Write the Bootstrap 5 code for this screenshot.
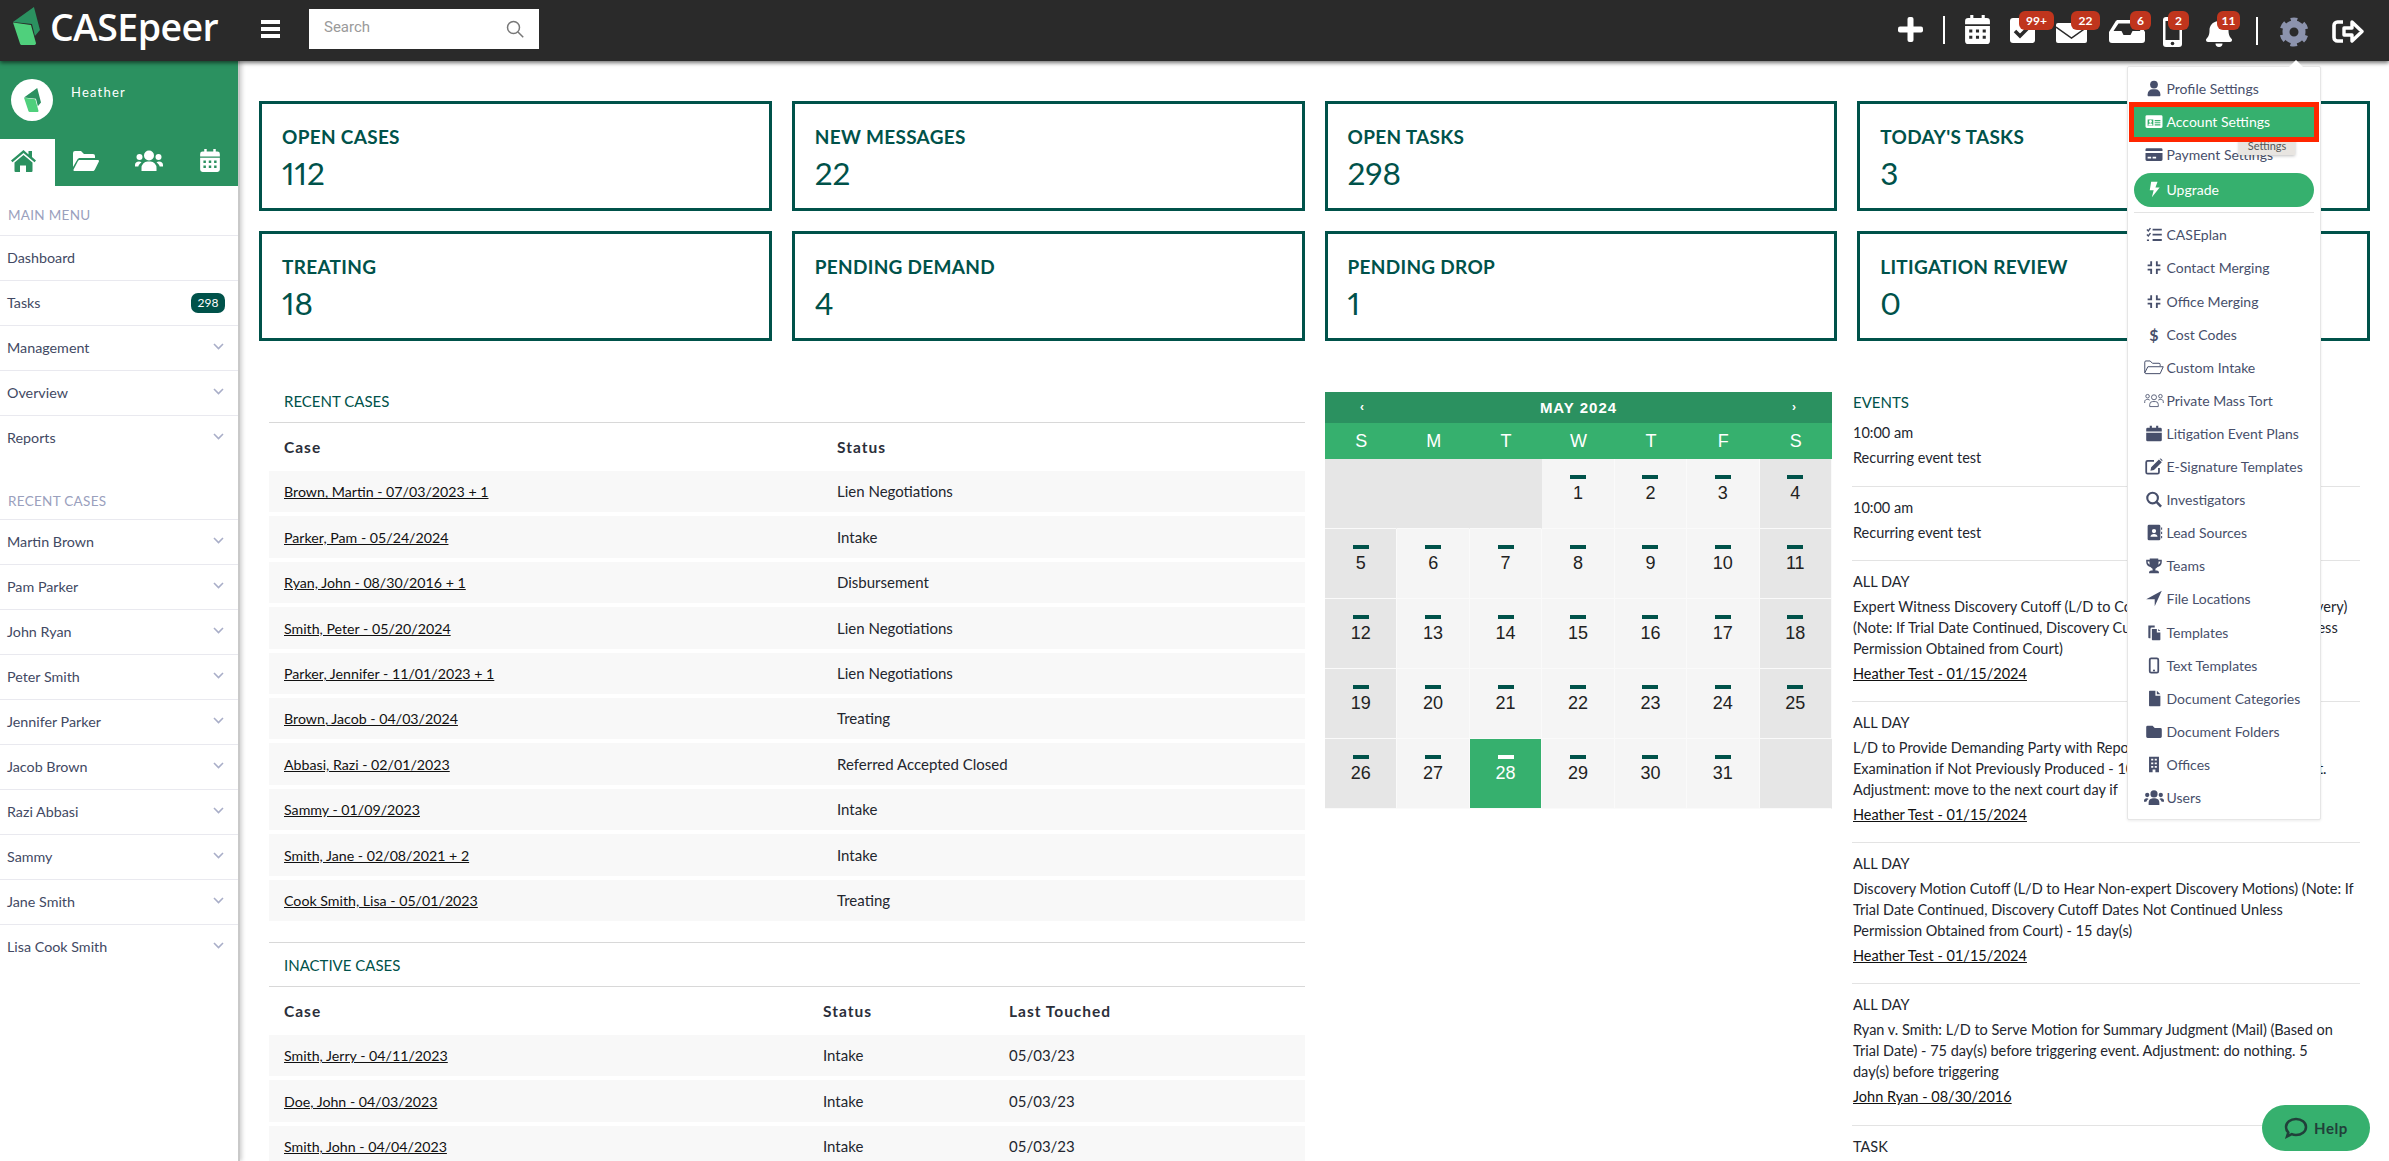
<!DOCTYPE html>
<html lang="en"><head><meta charset="utf-8"><title>CASEpeer</title>
<link rel="stylesheet" href="https://cdn.jsdelivr.net/npm/bootstrap@5.3.0/dist/css/bootstrap.min.css">
<script src="https://cdn.jsdelivr.net/npm/bootstrap@5.3.0/dist/js/bootstrap.bundle.min.js"></script>
<style>
:root{--teal:#00524a;--g1:#2b9160;--g2:#36b06e;--ink:#2b2f3a;--slate:#474f6b}
html,body{height:1161px;overflow:hidden}
body{font-family:Lato,"Liberation Sans",sans-serif;font-size:14px;color:#23262e;background:#fff}
.topbar{height:61px;background:#2a2a2a;padding:0;box-shadow:0 2px 4px rgba(0,0,0,.55);position:relative;z-index:5;justify-content:flex-start;align-items:flex-start;flex-wrap:nowrap}
.logo-wrap{margin:7px 0 0 13px;width:205px;display:flex;gap:10px;align-items:flex-start}
.logo-text{font-family:"Open Sans",sans-serif;font-size:37.5px;line-height:42px;color:#fff;font-weight:600;letter-spacing:-.6px;margin-top:-1px}
.burger{margin:20px 0 0 43px;width:19px}
.burger i{display:block;height:3.5px;background:#fff;margin-bottom:3.5px}
.search-box{margin:9px 0 0 29px;width:230px;height:40px;background:#fff;display:flex;align-items:center;justify-content:space-between;padding:0 15px;border:0}
.search-box input{border:0;outline:0;font-family:Roboto,sans-serif;font-size:15px;width:170px;padding:0;margin-top:-3px}
.search-box input::placeholder{color:#9a9a9a}
.tools{margin-left:auto;display:flex;align-items:flex-start;padding-right:25px;height:61px}
.tool{position:relative;height:61px;color:#fff}
.tool svg{display:block}
.t1{padding-top:17px}.t2{margin-left:20px;padding-top:16px}.t3{margin-left:20px;padding-top:15px}.t4{margin-left:20px;padding-top:18px}
.t5{margin-left:21px;padding-top:23px}.t6{margin-left:22px;padding-top:20px}.t7{margin-left:18px;padding-top:17px}.t8{margin-left:24px;padding-top:18px}
.t9{margin-left:24px;padding-top:17px}.t10{margin-left:22px;padding-top:17px}.t11{margin-left:24px;padding-top:20px}
.vsep{width:2px;height:28px;background:#fff}
.nbadge{position:absolute;top:11px;height:19px;background:#c0351d;color:#fff;border-radius:6px;font-family:Lato,sans-serif;font-size:12px;font-weight:700;line-height:19px;padding:0;text-align:center}
.b4{left:9px;width:35px}.b5{left:15px;width:29px}.b6{left:21px;width:21px}.b7{left:5px;width:21px}.b8{left:11px;width:23px}
.shell{display:flex;height:1100px}
.side{width:240px;flex:none;border-right:2px solid #c9c9c9;box-shadow:2px 0 4px rgba(0,0,0,.18);background:#fff;position:relative;z-index:2}
.side-top{background:var(--g1);height:125px;position:relative}
.who{display:flex;padding:18px 0 0 11px;height:78px}
.ava{width:42px;height:42px;border-radius:50%;background:#fff;display:flex;align-items:center;justify-content:center}
.who-name{color:#fff;font-size:13px;letter-spacing:1.2px;margin:3px 0 0 18px;line-height:20px}
.tabs{display:flex;height:47px}
.tabs a{display:flex;align-items:center;justify-content:center;color:#fff;height:47px;width:62px;padding-bottom:4px}
.tabs a.on{background:#fff;color:var(--g1);width:55px;padding-right:7px}
.tabs a:nth-child(3){width:66px}
.tabs a:nth-child(4){width:56px}
.side-h{font-size:13.5px;color:#9aa0bd;line-height:20px;padding:19px 0 10px 8px;letter-spacing:.3px}
.side-h.second{padding:30px 0 8px 8px}
.side-list{border-top:1.5px solid #e9e9ef;border-radius:0}
.side-list .list-group-item{height:45px;padding:0 14px 1px 7px;display:flex;align-items:center;justify-content:space-between;color:#424963;font-size:14.3px;border-color:#e9e9ef;border-width:0 0 1.5px;background:transparent}
.cnt{background:var(--teal);font-size:12px;font-weight:400;border-radius:7px;padding:0;width:34px;height:20px;line-height:20px;margin-right:-1px}
.chev{color:#a9aec8;margin-top:-3px}
.main{flex:1;padding:40px 19px 0 19px;min-width:0}
.stat-grid{display:grid;grid-template-columns:repeat(4,1fr);gap:20px}
.stat-tile{height:110px;border:3px solid var(--teal);border-radius:0;color:var(--teal)}
.stat-tile .card-body{padding:22px 20px 0}
.st-name{font-size:19px;line-height:22px;font-weight:700;margin-bottom:7px;letter-spacing:.3px}
.st-num{font-size:31.5px;line-height:36px;font-weight:400;font-variant-numeric:proportional-nums;font-feature-settings:"pnum" 1}
.lower{display:grid;grid-template-columns:1036px 507px 508px;gap:0 20px;margin:43px 0 0 10px}
.sec-h{color:var(--teal);font-size:15px;line-height:20px;padding:7px 15px 11px;border-bottom:1.5px solid #d8d8d8}
.sec-h.alt{padding:12px 15px 11px;border-top:1.5px solid #d8d8d8;margin-top:17px}
.case-table{table-layout:fixed;width:100%;border-collapse:separate;border-spacing:0 4px;margin:0}
.case-table th,.case-table td{border:0;padding:0 15px;vertical-align:middle;background:transparent;color:#23262e;box-shadow:none;font-size:15px}
.case-table th{height:40px;padding-top:2px;color:var(--ink);font-weight:700;letter-spacing:1px;font-size:15.5px}
.case-table td{height:41.4px;--bs-table-bg:#f8f8f8;background:#f8f8f8}
.case-table td a{font-size:14.2px}
.case-table a,.ev-item a{color:#111;text-decoration:underline}
.c1{width:553px}.c2{width:539px}.c3{width:186px}
.cal-wrap{align-self:start;margin-top:8px}
.cal-title{height:31px;background:var(--g1);color:#fff;display:flex;align-items:center;justify-content:space-between;padding:0 35px;font:700 15px/31px "Liberation Sans",sans-serif;letter-spacing:1px}
.cal-title span{font-size:12px}
.cal-grid{display:grid;grid-template-columns:repeat(7,1fr);font-family:"Liberation Sans",sans-serif}
.dow{height:36px;background:var(--g2);color:#fff;font-size:18px;line-height:36px;text-align:center}
.day{height:70px;background:#f5f5f5;border-right:1px solid #fafafa;border-bottom:1px solid #fafafa;text-align:center;padding-top:16px;font-size:18px;line-height:24px;color:#222}
.day i{display:block;width:16px;height:4px;background:var(--teal);margin:0 auto 2px}
.day.we{background:#e6e6e6}
.day.blank{border-right-color:#e6e6e6}
.day.now{background:var(--g2);color:#fff}
.day.now i{background:#fff}
.events{margin-top:1px}
.events .sec-h{border:0;padding:7px 1px 0;height:27px}
.ev-item{padding:10px 1px 17.6px;border-bottom:1.5px solid #e3e3e3;line-height:21px;font-size:14.5px}
.ev-item p{margin:0}
.ev-item .ev-t{margin-bottom:4px}
.ev-item a{display:block;margin-top:3.5px}
.set-menu{position:absolute;display:block;top:66px;right:68px;width:194px;margin:0;padding:7px 6px 6px;border:1px solid #e6e6e6;border-radius:2px;z-index:6;background:#fff;min-width:0;box-shadow:0 1px 3px rgba(0,0,0,.08)}
.set-menu::before{content:"";position:absolute;top:-7px;left:161px;border:7px solid transparent;border-top:0;border-bottom-color:#fff}
.set-list{display:flex;flex-direction:column;gap:3.1px;list-style:none;margin:0;padding:0}
.set-menu .dropdown-item{height:30px;padding:0 0 2px 10px;display:flex;align-items:center;gap:2.5px;color:var(--slate);font-size:14px;white-space:nowrap}
.set-menu .dropdown-item svg{flex:none;width:20px;height:17px}
.set-menu .dropdown-item.act{background:var(--g2);color:#fff;outline:5px solid #ff2600;position:relative;z-index:3}
.set-menu .dropdown-item.upg{background:var(--g2);color:#fff;height:34px;border-radius:17px;margin-top:-.1px}
.set-menu .dropdown-divider{margin:2px 0 4.5px;border-color:#e3e3e3;opacity:1}
.dollar{width:20px;text-align:center;font-weight:700;font-size:16px;line-height:17px}
.tip{position:absolute;left:111px;top:69px;width:56px;height:19px;background:#e8e5e1;color:#555;font-size:11px;line-height:20px;text-align:center;z-index:2;box-shadow:0 1px 3px rgba(0,0,0,.25)}
.help-btn{position:fixed;left:2262px;top:1105px;width:108px;height:46px;border-radius:23px;background:var(--g2);border:0;color:#21403a;font-weight:700;font-size:15px;letter-spacing:.6px;display:flex;align-items:center;justify-content:center;gap:6px;z-index:7;padding:0}
</style></head><body>
<svg width="0" height="0" class="position-absolute" aria-hidden="true"><defs>
<symbol id="i-logo" viewBox="0 0 27 38"><path fill="#2b9160" d="M0 15 21 0l6 23-5 6-3-12z"/><path fill="#4fd07c" d="M0 15.5 18 18l5 18c.2 1-.5 2-1.5 2H9c-1 0-1.6-.4-2-1.5z"/></symbol>
<symbol id="i-home" viewBox="0 0 25 22"><path d="M12.500 0 0 10.500l1.500 1.800L12.500 3l11 9.300 1.500-1.800-4-3.400V1h-3.500v3.400z"/><path d="M3.500 12.500 12.500 5l9 7.500V21a1 1 0 0 1-1 1h-5.500v-6.500h-6V22H4.500a1 1 0 0 1-1-1z"/></symbol>
<symbol id="i-fopen" viewBox="0 0 26 20"><path d="M0 2a2 2 0 0 1 2-2h6l3 3h9a2 2 0 0 1 2 2v2H7c-1.200 0-2 .5-2.600 1.500L0 16z"/><path d="M6.500 9H25c.8 0 1.300.8.900 1.500l-4 8c-.3.9-1 1.500-2 1.500H1.500c-.8 0-1.300-.8-.9-1.500l4.400-8.500c.3-.4.900-1 1.500-1z"/></symbol>
<symbol id="i-users" viewBox="0 0 28 21"><circle cx="14" cy="5.500" r="5"/><circle cx="4.500" cy="7" r="3"/><circle cx="23.500" cy="7" r="3"/><path d="M6.500 21v-3a6.500 6.500 0 0 1 6-6.500h3a6.500 6.500 0 0 1 6 6.500v3z"/><path d="M0 16.500v-1.500c0-2 1.500-3.500 4-3.500 1 0 1.800.3 2.500 1-1.500 1-2.800 2.400-3.200 4zM28 16.500V15c0-2-1.500-3.500-4-3.500-1 0-1.800.3-2.500 1 1.500 1 2.800 2.400 3.200 4z"/></symbol>
<symbol id="i-cal" viewBox="0 0 24 28"><path fill-rule="evenodd" d="M5 0h3v3h8V0h3v3h2a3 3 0 0 1 3 3v3H0V6a3 3 0 0 1 3-3h2zM0 10.500h24V25a3 3 0 0 1-3 3H3a3 3 0 0 1-3-3zM4 14v3h3v-3zM10.500 14v3h3v-3zM17 14v3h3v-3zM4 20v3h3v-3zM10.500 20v3h3v-3zM17 20v3h3v-3z"/></symbol>
<symbol id="i-user" viewBox="0 0 24 24"><circle cx="12" cy="6.500" r="5.500"/><path d="M3 22v-2a7 7 0 0 1 7-7h4a7 7 0 0 1 7 7v2a1 1 0 0 1-1 1H4a1 1 0 0 1-1-1z"/></symbol>
<symbol id="i-id" viewBox="0 0 24 24"><path fill-rule="evenodd" d="M2 3h20a2 2 0 0 1 2 2v14a2 2 0 0 1-2 2H2a2 2 0 0 1-2-2V5a2 2 0 0 1 2-2zM3 9v9h8V9zM13 10v1.500h8V10zM13 13v1.500h8V13zM13 16v1.500h8V16z"/><circle cx="7" cy="12" r="2"/><path d="M4 17.500c0-2 1.500-3 3-3s3 1 3 3z"/></symbol>
<symbol id="i-card" viewBox="0 0 24 24"><path fill-rule="evenodd" d="M2 3h20a2 2 0 0 1 2 2v2H0V5a2 2 0 0 1 2-2zM0 10h24v9a2 2 0 0 1-2 2H2a2 2 0 0 1-2-2zM3 15v2.500h5V15zM10 15v2.500h5V15z"/></symbol>
<symbol id="i-bolt" viewBox="0 0 24 24"><path d="M8 1h9l-3 8h6L9 23l2.500-10H6z"/></symbol>
<symbol id="i-tasks" viewBox="0 0 24 24"><path d="M2 5l2 2 3-4M2 12l2 2 3-4M2 20h3" fill="none" stroke="currentColor" stroke-width="2"/><path d="M10 4h13v2.500H10zM10 11h13v2.500H10zM10 18.500h13V21H10z"/></symbol>
<symbol id="i-comp" viewBox="0 0 24 24"><path d="M8 3v6H3M16 3v6h5M8 21v-6H3M16 21v-6h5" fill="none" stroke="currentColor" stroke-width="2.600"/></symbol>
<symbol id="i-fo" viewBox="0 0 26 20"><path d="M1 17V3a1.500 1.500 0 0 1 1.500-1.500H8l3 3h8.500A1.500 1.500 0 0 1 21 6v2M1 17l4-8h20l-4 9H2z" fill="none" stroke="currentColor" stroke-width="1.300" stroke-linejoin="round"/></symbol>
<symbol id="i-uo" viewBox="0 0 28 21"><g fill="none" stroke="currentColor" stroke-width="1.200"><circle cx="14" cy="6" r="3.500"/><circle cx="5" cy="4.500" r="2.500"/><circle cx="23" cy="4.500" r="2.500"/><path d="M8 19v-3a4 4 0 0 1 4-4h4a4 4 0 0 1 4 4v3zM1 14v-2c0-2 1.500-3 4-3 1.500 0 2.500.5 3 1M27 14v-2c0-2-1.500-3-4-3-1.500 0-2.500.5-3 1"/></g></symbol>
<symbol id="i-c2" viewBox="0 0 24 24"><path d="M6 1h3v3h6V1h3v3h3a2 2 0 0 1 2 2v3H1V6a2 2 0 0 1 2-2h3zM1 11h22v10a2 2 0 0 1-2 2H3a2 2 0 0 1-2-2z"/></symbol>
<symbol id="i-edit" viewBox="0 0 24 24"><path d="M19 14v6a2 2 0 0 1-2 2H3a2 2 0 0 1-2-2V6a2 2 0 0 1 2-2h9" fill="none" stroke="currentColor" stroke-width="2.500"/><path d="M8 13 19 2l4 4-11 11-5 1zM20 1a1.500 1.500 0 0 1 2 0l1.500 1.500a1.500 1.500 0 0 1 0 2z"/></symbol>
<symbol id="i-sr" viewBox="0 0 24 24"><circle cx="10" cy="10" r="7.500" fill="none" stroke="currentColor" stroke-width="3"/><path d="M15.500 15.500 22 22" stroke="currentColor" stroke-width="3.500"/></symbol>
<symbol id="i-addr" viewBox="0 0 24 24"><path fill-rule="evenodd" d="M5 1h14a2 2 0 0 1 2 2v18a2 2 0 0 1-2 2H5a2 2 0 0 1-2-2V3a2 2 0 0 1 2-2zM12 7a3 3 0 1 0 0 6 3 3 0 0 0 0-6zM7 18h10c0-2.500-2-4-5-4s-5 1.500-5 4z"/><path d="M22 5h1.500v3H22zM22 11h1.500v3H22zM22 17h1.500v3H22z"/></symbol>
<symbol id="i-tro" viewBox="0 0 24 24"><path fill-rule="evenodd" d="M6 2h12v2h5v3c0 4-3 6.500-6 7-1 1.200-2 2-3 2.500V19h2c1.500 0 3 1 3 3v1H5v-1c0-2 1.500-3 3-3h2v-2.500c-1-.5-2-1.300-3-2.500-3-.5-6-3-6-7V4h5zM3 6.500c0 2 1 3.500 3 4.500-.4-1.500-.5-3-.5-4.500zM21 6.500h-2.500c0 1.500-.1 3-.5 4.500 2-1 3-2.500 3-4.500z"/></symbol>
<symbol id="i-loc" viewBox="0 0 24 24"><path d="M23 1 13 23v-10H1z"/></symbol>
<symbol id="i-copy" viewBox="0 0 24 24"><path d="M4 2h9v3H9a2 2 0 0 0-2 2v13H5a1 1 0 0 1-1-1z"/><path d="M9 7h7v5h5v10a1 1 0 0 1-1 1H10a1 1 0 0 1-1-1zM18 7l3 3h-3z"/></symbol>
<symbol id="i-mob" viewBox="0 0 24 24"><rect x="6" y="2" width="12" height="20" rx="2" fill="none" stroke="currentColor" stroke-width="2.500"/><circle cx="12" cy="19" r="1.500"/></symbol>
<symbol id="i-file" viewBox="0 0 24 24"><path d="M6 1h8v7h7v14a1 1 0 0 1-1 1H6a1 1 0 0 1-1-1V2a1 1 0 0 1 1-1zM16 1l5 5h-5z"/></symbol>
<symbol id="i-fold" viewBox="0 0 24 24"><path d="M1 6a2 2 0 0 1 2-2h7l3 3h8a2 2 0 0 1 2 2v10a2 2 0 0 1-2 2H3a2 2 0 0 1-2-2z"/></symbol>
<symbol id="i-bld" viewBox="0 0 24 24"><path fill-rule="evenodd" d="M5 1h14v22h-5v-4h-4v4H5zM8 4v2.500h3V4zM13 4v2.500h3V4zM8 9v2.500h3V9zM13 9v2.500h3V9zM8 14v2.500h3V14zM13 14v2.500h3V14z"/></symbol>
</defs></svg>

<nav class="navbar topbar">
  <div class="logo-wrap"><svg width="27" height="38"><use href="#i-logo"/></svg><span class="logo-text">CASEpeer</span></div>
  <div class="burger"><i></i><i></i><i></i></div>
  <form class="search-box"><input type="text" placeholder="Search" aria-label="Search"><svg width="18" height="18" viewBox="0 0 24 24" fill="none" stroke="#777" stroke-width="2"><circle cx="10" cy="10" r="8"/><path d="M16 16l7 7"/></svg></form>
  <div class="tools">
    <div class="tool t1"><svg width="25" height="25" viewBox="0 0 25 25" fill="#fff"><rect x="9.500" width="6" height="25" rx="2"/><rect y="9.500" width="25" height="6" rx="2"/></svg></div>
    <div class="tool t2"><div class="vsep"></div></div>
    <div class="tool t3"><svg width="25" height="29" fill="#fff"><use href="#i-cal"/></svg></div>
    <div class="tool t4"><svg width="25" height="25" viewBox="0 0 25 25"><rect width="25" height="25" rx="3" fill="#fff"/><path d="M5 13l5 5 10-10" stroke="#2a2a2a" stroke-width="3.500" fill="none"/></svg><span class="nbadge b4">99+</span></div>
    <div class="tool t5"><svg width="31" height="20" viewBox="0 0 31 20"><rect width="31" height="20" rx="2" fill="#fff"/><path d="M0 4l15.500 11L31 4" stroke="#2a2a2a" stroke-width="1.500" fill="none"/></svg><span class="nbadge b5">22</span></div>
    <div class="tool t6"><svg width="36" height="23" viewBox="0 0 36 23"><path fill="#fff" d="M9 0h18c1 0 2 .5 2.500 1.500L36 12v8a3 3 0 0 1-3 3H3a3 3 0 0 1-3-3v-8L6.500 1.500C7 .5 8 0 9 0z"/><path fill="#2a2a2a" d="M9.500 3.500 4.500 11h8l2 4h7l2-4h8l-5-7.500z"/></svg><span class="nbadge b6">6</span></div>
    <div class="tool t7"><svg width="19" height="30" viewBox="0 0 19 30"><rect width="19" height="30" rx="3" fill="#fff"/><rect x="2.500" y="4" width="14" height="19" fill="#2a2a2a"/><circle cx="9.500" cy="26.500" r="1.800" fill="#2a2a2a"/></svg><span class="nbadge b7">2</span></div>
    <div class="tool t8"><svg width="26" height="29" viewBox="0 0 26 29" fill="#fff"><path d="M13 0a2 2 0 0 1 2 2v1.200c4.600.8 7.500 4.600 7.500 9.300 0 5.300 1.800 6.900 3 8.200.4.400.5.800.5 1.300 0 1-.8 2-2 2H2c-1.200 0-2-1-2-2 0-.5.1-.9.500-1.300 1.200-1.300 3-2.900 3-8.200 0-4.700 2.900-8.500 7.500-9.300V2a2 2 0 0 1 2-2zM9.500 25.500h7a3.500 3.500 0 0 1-7 0z"/></svg><span class="nbadge b8">11</span></div>
    <div class="tool t9"><div class="vsep"></div></div>
    <div class="tool t10"><svg width="28" height="30" viewBox="0 0 28 30" fill="none" stroke="#8c93ad"><circle cx="14" cy="15" r="8" stroke-width="7"/><circle cx="14" cy="15" r="12.500" stroke-width="4" stroke-dasharray="6.540 6.550" transform="rotate(-105 14 15)"/></svg></div>
    <div class="tool t11"><svg width="32" height="23" viewBox="0 0 32 23" fill="none" stroke="#fff"><path d="M11 2H5.500A3.500 3.500 0 0 0 2 5.500v12A3.500 3.500 0 0 0 5.500 21H11" stroke-width="3.600"/><path d="M20 2l10 9.500L20 21v-6h-8V8h8z" stroke-width="3.400" stroke-linejoin="round"/></svg></div>
  </div>
</nav>

<div class="shell">
  <aside class="side">
    <div class="side-top">
      <div class="who"><div class="ava"><svg width="17" height="24"><use href="#i-logo"/></svg></div><div class="who-name">Heather</div></div>
      <div class="tabs">
        <a class="on" href="#"><svg width="25" height="22" fill="currentColor"><use href="#i-home"/></svg></a>
        <a href="#"><svg width="26" height="20" fill="currentColor"><use href="#i-fopen"/></svg></a>
        <a href="#"><svg width="28" height="21" fill="currentColor"><use href="#i-users"/></svg></a>
        <a href="#"><svg width="20" height="23" fill="currentColor"><use href="#i-cal"/></svg></a>
      </div>
    </div>
    <div class="side-h">MAIN MENU</div>
    <div class="list-group list-group-flush side-list">
      <a class="list-group-item" href="#">Dashboard</a>
      <a class="list-group-item" href="#">Tasks<span class="badge cnt">298</span></a>
      <a class="list-group-item" href="#">Management<svg class="chev" width="11" height="7" viewBox="0 0 11 7" fill="none" stroke="currentColor" stroke-width="1.600"><path d="M1 1l4.500 4.500L10 1"/></svg></a>
      <a class="list-group-item" href="#">Overview<svg class="chev" width="11" height="7" viewBox="0 0 11 7" fill="none" stroke="currentColor" stroke-width="1.600"><path d="M1 1l4.500 4.500L10 1"/></svg></a>
      <a class="list-group-item" href="#">Reports<svg class="chev" width="11" height="7" viewBox="0 0 11 7" fill="none" stroke="currentColor" stroke-width="1.600"><path d="M1 1l4.500 4.500L10 1"/></svg></a>
    </div>
    <div class="side-h second">RECENT CASES</div>
    <div class="list-group list-group-flush side-list">
      <a class="list-group-item" href="#">Martin Brown<svg class="chev" width="11" height="7" viewBox="0 0 11 7" fill="none" stroke="currentColor" stroke-width="1.600"><path d="M1 1l4.500 4.500L10 1"/></svg></a>
      <a class="list-group-item" href="#">Pam Parker<svg class="chev" width="11" height="7" viewBox="0 0 11 7" fill="none" stroke="currentColor" stroke-width="1.600"><path d="M1 1l4.500 4.500L10 1"/></svg></a>
      <a class="list-group-item" href="#">John Ryan<svg class="chev" width="11" height="7" viewBox="0 0 11 7" fill="none" stroke="currentColor" stroke-width="1.600"><path d="M1 1l4.500 4.500L10 1"/></svg></a>
      <a class="list-group-item" href="#">Peter Smith<svg class="chev" width="11" height="7" viewBox="0 0 11 7" fill="none" stroke="currentColor" stroke-width="1.600"><path d="M1 1l4.500 4.500L10 1"/></svg></a>
      <a class="list-group-item" href="#">Jennifer Parker<svg class="chev" width="11" height="7" viewBox="0 0 11 7" fill="none" stroke="currentColor" stroke-width="1.600"><path d="M1 1l4.500 4.500L10 1"/></svg></a>
      <a class="list-group-item" href="#">Jacob Brown<svg class="chev" width="11" height="7" viewBox="0 0 11 7" fill="none" stroke="currentColor" stroke-width="1.600"><path d="M1 1l4.500 4.500L10 1"/></svg></a>
      <a class="list-group-item" href="#">Razi Abbasi<svg class="chev" width="11" height="7" viewBox="0 0 11 7" fill="none" stroke="currentColor" stroke-width="1.600"><path d="M1 1l4.500 4.500L10 1"/></svg></a>
      <a class="list-group-item" href="#">Sammy<svg class="chev" width="11" height="7" viewBox="0 0 11 7" fill="none" stroke="currentColor" stroke-width="1.600"><path d="M1 1l4.500 4.500L10 1"/></svg></a>
      <a class="list-group-item" href="#">Jane Smith<svg class="chev" width="11" height="7" viewBox="0 0 11 7" fill="none" stroke="currentColor" stroke-width="1.600"><path d="M1 1l4.500 4.500L10 1"/></svg></a>
      <a class="list-group-item" href="#">Lisa Cook Smith<svg class="chev" width="11" height="7" viewBox="0 0 11 7" fill="none" stroke="currentColor" stroke-width="1.600"><path d="M1 1l4.500 4.500L10 1"/></svg></a>
    </div>
  </aside>
  <main class="main">
    <div class="stat-grid">
      <div class="card stat-tile"><div class="card-body"><div class="st-name">OPEN CASES</div><div class="st-num">112</div></div></div>
      <div class="card stat-tile"><div class="card-body"><div class="st-name">NEW MESSAGES</div><div class="st-num">22</div></div></div>
      <div class="card stat-tile"><div class="card-body"><div class="st-name">OPEN TASKS</div><div class="st-num">298</div></div></div>
      <div class="card stat-tile"><div class="card-body"><div class="st-name">TODAY'S TASKS</div><div class="st-num">3</div></div></div>
      <div class="card stat-tile"><div class="card-body"><div class="st-name">TREATING</div><div class="st-num">18</div></div></div>
      <div class="card stat-tile"><div class="card-body"><div class="st-name">PENDING DEMAND</div><div class="st-num">4</div></div></div>
      <div class="card stat-tile"><div class="card-body"><div class="st-name">PENDING DROP</div><div class="st-num">1</div></div></div>
      <div class="card stat-tile"><div class="card-body"><div class="st-name">LITIGATION REVIEW</div><div class="st-num">0</div></div></div>
    </div>
    <div class="lower">
      <section>
        <div class="sec-h">RECENT CASES</div>
        <table class="table case-table">
          <colgroup><col class="c1"><col></colgroup>
          <thead><tr><th>Case</th><th>Status</th></tr></thead>
          <tbody>
            <tr><td><a href="#">Brown, Martin - 07/03/2023 + 1</a></td><td>Lien Negotiations</td></tr>
            <tr><td><a href="#">Parker, Pam - 05/24/2024</a></td><td>Intake</td></tr>
            <tr><td><a href="#">Ryan, John - 08/30/2016 + 1</a></td><td>Disbursement</td></tr>
            <tr><td><a href="#">Smith, Peter - 05/20/2024</a></td><td>Lien Negotiations</td></tr>
            <tr><td><a href="#">Parker, Jennifer - 11/01/2023 + 1</a></td><td>Lien Negotiations</td></tr>
            <tr><td><a href="#">Brown, Jacob - 04/03/2024</a></td><td>Treating</td></tr>
            <tr><td><a href="#">Abbasi, Razi - 02/01/2023</a></td><td>Referred Accepted Closed</td></tr>
            <tr><td><a href="#">Sammy - 01/09/2023</a></td><td>Intake</td></tr>
            <tr><td><a href="#">Smith, Jane - 02/08/2021 + 2</a></td><td>Intake</td></tr>
            <tr><td><a href="#">Cook Smith, Lisa - 05/01/2023</a></td><td>Treating</td></tr>
          </tbody>
        </table>
        <div class="sec-h alt">INACTIVE CASES</div>
        <table class="table case-table">
          <colgroup><col class="c2"><col class="c3"><col></colgroup>
          <thead><tr><th>Case</th><th>Status</th><th>Last Touched</th></tr></thead>
          <tbody>
            <tr><td><a href="#">Smith, Jerry - 04/11/2023</a></td><td>Intake</td><td>05/03/23</td></tr>
            <tr><td><a href="#">Doe, John - 04/03/2023</a></td><td>Intake</td><td>05/03/23</td></tr>
            <tr><td><a href="#">Smith, John - 04/04/2023</a></td><td>Intake</td><td>05/03/23</td></tr>
          </tbody>
        </table>
      </section>
      <section class="cal-wrap">
        <div class="cal-title"><span>‹</span>MAY 2024<span>›</span></div>
        <div class="cal-grid">
          <div class="dow">S</div><div class="dow">M</div><div class="dow">T</div><div class="dow">W</div><div class="dow">T</div><div class="dow">F</div><div class="dow">S</div>
          <div class="day we blank"></div><div class="day we blank"></div><div class="day we blank"></div><div class="day"><i></i>1</div><div class="day"><i></i>2</div><div class="day"><i></i>3</div><div class="day we"><i></i>4</div>
          <div class="day we"><i></i>5</div><div class="day"><i></i>6</div><div class="day"><i></i>7</div><div class="day"><i></i>8</div><div class="day"><i></i>9</div><div class="day"><i></i>10</div><div class="day we"><i></i>11</div>
          <div class="day we"><i></i>12</div><div class="day"><i></i>13</div><div class="day"><i></i>14</div><div class="day"><i></i>15</div><div class="day"><i></i>16</div><div class="day"><i></i>17</div><div class="day we"><i></i>18</div>
          <div class="day we"><i></i>19</div><div class="day"><i></i>20</div><div class="day"><i></i>21</div><div class="day"><i></i>22</div><div class="day"><i></i>23</div><div class="day"><i></i>24</div><div class="day we"><i></i>25</div>
          <div class="day we"><i></i>26</div><div class="day"><i></i>27</div><div class="day now"><i></i>28</div><div class="day"><i></i>29</div><div class="day"><i></i>30</div><div class="day"><i></i>31</div><div class="day we blank"></div>
        </div>
      </section>
      <section class="events">
        <div class="sec-h">EVENTS</div>
        <div class="ev-item"><p class="ev-t">10:00 am</p><p>Recurring event test</p></div>
        <div class="ev-item"><p class="ev-t">10:00 am</p><p>Recurring event test</p></div>
        <div class="ev-item"><p class="ev-t">ALL DAY</p><p>Expert Witness Discovery Cutoff (L/D to Complete Expert Witness Discovery)<br>(Note: If Trial Date Continued, Discovery Cutoff Dates Not Continued Unless<br>Permission Obtained from Court)</p><a href="#">Heather Test - 01/15/2024</a></div>
        <div class="ev-item"><p class="ev-t">ALL DAY</p><p>L/D to Provide Demanding Party with Report of Physical<br>Examination if Not Previously Produced - 10 day(s) before triggering event.<br>Adjustment: move to the next court day if</p><a href="#">Heather Test - 01/15/2024</a></div>
        <div class="ev-item"><p class="ev-t">ALL DAY</p><p>Discovery Motion Cutoff (L/D to Hear Non-expert Discovery Motions) (Note: If<br>Trial Date Continued, Discovery Cutoff Dates Not Continued Unless<br>Permission Obtained from Court) - 15 day(s)</p><a href="#">Heather Test - 01/15/2024</a></div>
        <div class="ev-item"><p class="ev-t">ALL DAY</p><p>Ryan v. Smith: L/D to Serve Motion for Summary Judgment (Mail) (Based on<br>Trial Date) - 75 day(s) before triggering event. Adjustment: do nothing. 5<br>day(s) before triggering</p><a href="#">John Ryan - 08/30/2016</a></div>
        <div class="ev-item"><p class="ev-t">TASK</p></div>
      </section>
    </div>
  </main>
</div>

<div class="dropdown-menu set-menu">
  <ul class="set-list">
    <li><a class="dropdown-item" href="#"><svg fill="currentColor"><use href="#i-user"/></svg>Profile Settings</a></li>
    <li><a class="dropdown-item act" href="#"><svg fill="currentColor"><use href="#i-id"/></svg>Account Settings</a></li>
    <li><a class="dropdown-item" href="#"><svg fill="currentColor"><use href="#i-card"/></svg>Payment Settings</a></li>
    <li><a class="dropdown-item upg" href="#"><svg fill="currentColor"><use href="#i-bolt"/></svg>Upgrade</a></li>
    <li><hr class="dropdown-divider"></li>
    <li><a class="dropdown-item" href="#"><svg fill="currentColor"><use href="#i-tasks"/></svg>CASEplan</a></li>
    <li><a class="dropdown-item" href="#"><svg fill="currentColor"><use href="#i-comp"/></svg>Contact Merging</a></li>
    <li><a class="dropdown-item" href="#"><svg fill="currentColor"><use href="#i-comp"/></svg>Office Merging</a></li>
    <li><a class="dropdown-item" href="#"><span class="dollar">$</span>Cost Codes</a></li>
    <li><a class="dropdown-item" href="#"><svg fill="currentColor"><use href="#i-fo"/></svg>Custom Intake</a></li>
    <li><a class="dropdown-item" href="#"><svg fill="currentColor"><use href="#i-uo"/></svg>Private Mass Tort</a></li>
    <li><a class="dropdown-item" href="#"><svg fill="currentColor"><use href="#i-c2"/></svg>Litigation Event Plans</a></li>
    <li><a class="dropdown-item" href="#"><svg fill="currentColor"><use href="#i-edit"/></svg>E-Signature Templates</a></li>
    <li><a class="dropdown-item" href="#"><svg fill="currentColor"><use href="#i-sr"/></svg>Investigators</a></li>
    <li><a class="dropdown-item" href="#"><svg fill="currentColor"><use href="#i-addr"/></svg>Lead Sources</a></li>
    <li><a class="dropdown-item" href="#"><svg fill="currentColor"><use href="#i-tro"/></svg>Teams</a></li>
    <li><a class="dropdown-item" href="#"><svg fill="currentColor"><use href="#i-loc"/></svg>File Locations</a></li>
    <li><a class="dropdown-item" href="#"><svg fill="currentColor"><use href="#i-copy"/></svg>Templates</a></li>
    <li><a class="dropdown-item" href="#"><svg fill="currentColor"><use href="#i-mob"/></svg>Text Templates</a></li>
    <li><a class="dropdown-item" href="#"><svg fill="currentColor"><use href="#i-file"/></svg>Document Categories</a></li>
    <li><a class="dropdown-item" href="#"><svg fill="currentColor"><use href="#i-fold"/></svg>Document Folders</a></li>
    <li><a class="dropdown-item" href="#"><svg fill="currentColor"><use href="#i-bld"/></svg>Offices</a></li>
    <li><a class="dropdown-item" href="#"><svg fill="currentColor"><use href="#i-users"/></svg>Users</a></li>
  </ul>
  <div class="tip">Settings</div>
</div>

<button class="btn help-btn" type="button"><svg width="24" height="22" viewBox="0 0 24 22" fill="none" stroke="#21403a" stroke-width="2.500"><path d="M12 2c5.500 0 10 3.500 10 8s-4.500 8-10 8c-1.500 0-3-.2-4.200-.8L3 19.500l1.300-4A7.500 7.500 0 0 1 2 10c0-4.500 4.500-8 10-8z"/></svg>Help</button>
</body></html>
